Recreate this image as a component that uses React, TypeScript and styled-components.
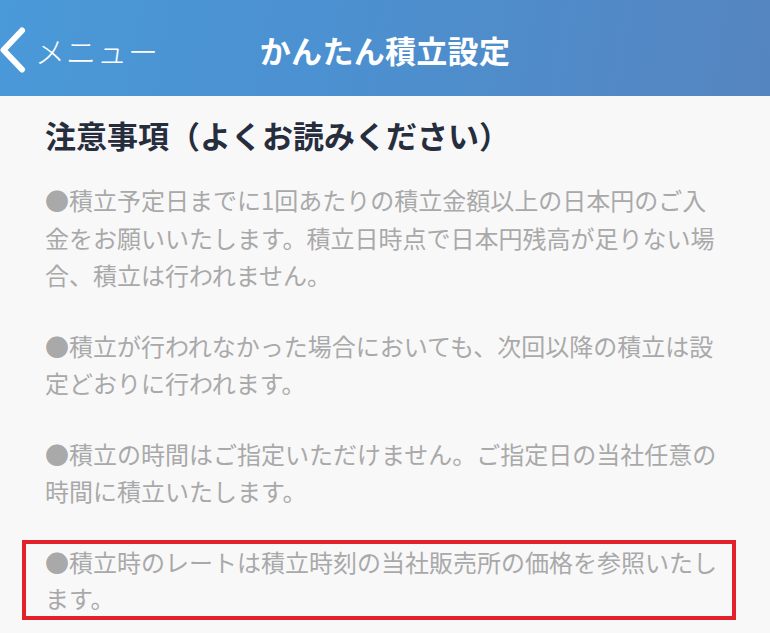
import React from "react";
import styled, { createGlobalStyle } from "styled-components";

const GlobalStyle = createGlobalStyle`
  html, body {
    margin: 0;
    padding: 0;
    background: #f8f8f9;
  }
  body {
    font-family: "Noto Sans CJK JP", "Noto Sans", sans-serif;
    overflow: hidden;
  }
`;

const Page = styled.div`
  width: 770px;
  height: 633px;
  background: #f8f8f9;
  display: flex;
  flex-direction: column;
  overflow: hidden;
`;

const Header = styled.header`
  height: 96px;
  flex: 0 0 96px;
  background: linear-gradient(100deg, #4a99d8 0%, #4c90d0 45%, #5585c0 100%);
  display: grid;
  grid-template-columns: 1fr auto 1fr;
  align-items: center;
  color: #ffffff;
`;

const BackButton = styled.div`
  display: flex;
  align-items: center;
  gap: 8px;
  padding-top: 3px;
`;

const BackLabel = styled.span`
  font-size: 30px;
  font-weight: 300;
  letter-spacing: 1px;
  line-height: 1;
  color: #ffffff;
`;

const Title = styled.h1`
  margin: 3px 0 0;
  font-size: 31px;
  font-weight: 700;
  line-height: 1;
  letter-spacing: 0.3px;
  color: #ffffff;
`;

const Content = styled.main`
  padding: 19px 50px 0 45px;
`;

const Heading = styled.h2`
  margin: 0 0 26px;
  font-size: 31px;
  font-weight: 700;
  line-height: 40px;
  color: #262d3d;
`;

const Note = styled.p`
  margin: 0 0 33px;
  font-size: 24px;
  font-weight: 400;
  line-height: 37.5px;
  color: #a9a9a9;
`;

const Highlight = styled.div`
  margin: -3px -16px 0 -23px;
  border: 4px solid #e3212b;
  padding: 0 12px 0 19px;

  ${Note} {
    margin: 0;
    line-height: 36px;
  }
`;

const Chevron = () => (
  <svg width="27" height="46" viewBox="0 0 27 46" aria-hidden="true">
    <path
      d="M22 3.5 L3.5 23 L22 42.5"
      fill="none"
      stroke="#ffffff"
      strokeWidth="6"
      strokeLinecap="round"
      strokeLinejoin="round"
    />
  </svg>
);

export default function App() {
  return (
    <>
      <GlobalStyle />
      <Page>
        <Header>
          <BackButton>
            <Chevron />
            <BackLabel>メニュー</BackLabel>
          </BackButton>
          <Title>かんたん積立設定</Title>
          <div />
        </Header>
        <Content>
          <Heading>注意事項（よくお読みください）</Heading>
          <Note>
            ●積立予定日までに1回あたりの積立金額以上の日本円のご入金をお願いいたします。積立日時点で日本円残高が足りない場合、積立は行われません。
          </Note>
          <Note>
            ●積立が行われなかった場合においても、次回以降の積立は設定どおりに行われます。
          </Note>
          <Note>
            ●積立の時間はご指定いただけません。ご指定日の当社任意の時間に積立いたします。
          </Note>
          <Highlight>
            <Note>●積立時のレートは積立時刻の当社販売所の価格を参照いたします。</Note>
          </Highlight>
        </Content>
      </Page>
    </>
  );
}
